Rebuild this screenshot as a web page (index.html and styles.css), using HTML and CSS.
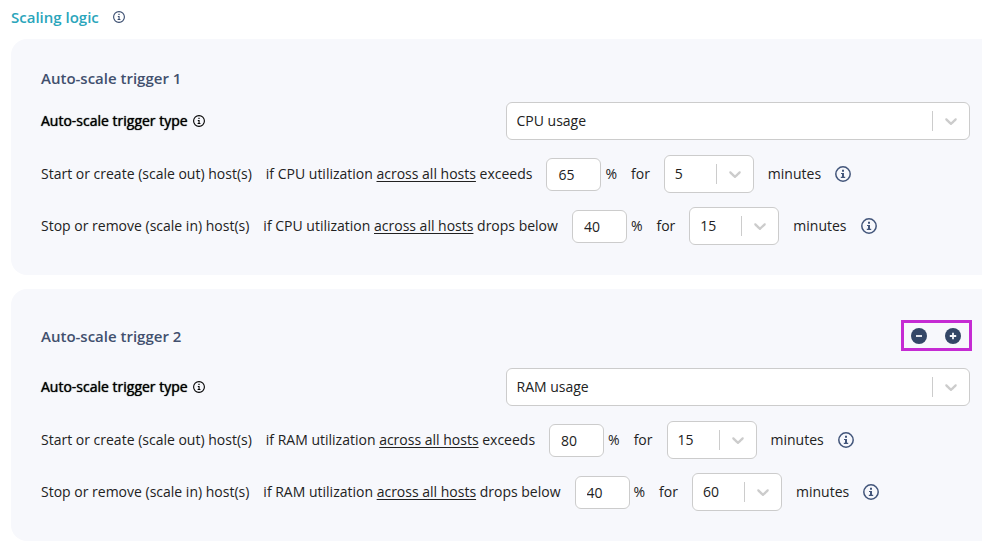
FILE: index.html
```html
<!DOCTYPE html>
<html lang="en">
<head>
<meta charset="utf-8">
<title>Scaling logic</title>
<link rel="stylesheet" href="styles.css">
</head>
<body>
<svg class="defs" aria-hidden="true">
  <symbol id="info" viewBox="0 0 16 16">
    <circle cx="8" cy="8" r="7.2" fill="none" stroke="currentColor" stroke-width="1.5"/>
    <path d="M7 3.800h2v1.900H7zM6 6.900h3v3.900h1.200V12H5.800v-1.200H7V8.100H6z" fill="currentColor"/>
  </symbol>
  <symbol id="info-small" viewBox="0 0 12 12">
    <circle cx="6" cy="6" r="5.400" fill="none" stroke="currentColor" stroke-width="1.100"/>
    <path d="M5.400 2.800h1.200v1.200H5.400zM4.800 5h1.800v3.100h.8V9H4.600v-.9h.9V5.900h-.7z" fill="currentColor"/>
  </symbol>
  <symbol id="chevron" viewBox="0 0 20 20">
    <path d="M4.516 7.548c0.436-0.446 1.043-0.481 1.576 0l3.908 3.747 3.908-3.747c0.533-0.481 1.141-0.446 1.574 0 0.436 0.445 0.408 1.197 0 1.615-0.406 0.418-4.695 4.502-4.695 4.502-0.217 0.223-0.502 0.335-0.787 0.335s-0.570-0.112-0.789-0.335c0 0-4.287-4.084-4.695-4.502s-0.436-1.170 0-1.615z" fill="currentColor"/>
  </symbol>
</svg>
<main class="page">
  <header class="page-head">
    <h1>Scaling logic</h1>
    <svg class="icon-small" role="img" aria-label="Info"><use href="#info-small"/></svg>
  </header>

  <section class="panel">
    <div class="panel-head"><h2>Auto-scale trigger 1</h2></div>
    <div class="field">
      <label for="type1">Auto-scale trigger type <svg class="icon-small" aria-hidden="true"><use href="#info-small"/></svg></label>
      <div class="select"><select id="type1"><option>CPU usage</option><option>RAM usage</option></select><svg class="chevron"><use href="#chevron"/></svg></div>
    </div>
    <div class="rule">
      <span>Start or create (scale out) host(s)</span>
      <label for="out1">if CPU utilization <u>across all hosts</u> exceeds</label>
      <span class="percent"><input id="out1" type="text" value="65">%</span>
      <label for="outmin1">for</label>
      <div class="select short"><select id="outmin1"><option>5</option><option>15</option><option>60</option></select><svg class="chevron"><use href="#chevron"/></svg></div>
      <span>minutes</span>
      <svg class="icon" role="img" aria-label="Info"><use href="#info"/></svg>
    </div>
    <div class="rule">
      <span>Stop or remove (scale in) host(s)</span>
      <label for="in1">if CPU utilization <u>across all hosts</u> drops below</label>
      <span class="percent"><input id="in1" type="text" value="40">%</span>
      <label for="inmin1">for</label>
      <div class="select short"><select id="inmin1"><option>15</option><option>5</option><option>60</option></select><svg class="chevron"><use href="#chevron"/></svg></div>
      <span>minutes</span>
      <svg class="icon" role="img" aria-label="Info"><use href="#info"/></svg>
    </div>
  </section>

  <section class="panel">
    <div class="panel-head with-actions">
      <h2>Auto-scale trigger 2</h2>
      <div class="actions">
        <button type="button" aria-label="Remove trigger"><svg class="icon" viewBox="0 0 16 16"><circle cx="8" cy="8" r="8" fill="currentColor"/><path d="M5 8h6" stroke="#f7f8fc" stroke-width="1.800"/></svg></button>
        <button type="button" aria-label="Add trigger"><svg class="icon" viewBox="0 0 16 16"><circle cx="8" cy="8" r="8" fill="currentColor"/><path d="M4.800 8h6.400M8 4.800v6.400" stroke="#f7f8fc" stroke-width="1.800"/></svg></button>
      </div>
    </div>
    <div class="field">
      <label for="type2">Auto-scale trigger type <svg class="icon-small" aria-hidden="true"><use href="#info-small"/></svg></label>
      <div class="select"><select id="type2"><option>RAM usage</option><option>CPU usage</option></select><svg class="chevron"><use href="#chevron"/></svg></div>
    </div>
    <div class="rule">
      <span>Start or create (scale out) host(s)</span>
      <label for="out2">if RAM utilization <u>across all hosts</u> exceeds</label>
      <span class="percent"><input id="out2" type="text" value="80">%</span>
      <label for="outmin2">for</label>
      <div class="select short"><select id="outmin2"><option>15</option><option>5</option><option>60</option></select><svg class="chevron"><use href="#chevron"/></svg></div>
      <span>minutes</span>
      <svg class="icon" role="img" aria-label="Info"><use href="#info"/></svg>
    </div>
    <div class="rule">
      <span>Stop or remove (scale in) host(s)</span>
      <label for="in2">if RAM utilization <u>across all hosts</u> drops below</label>
      <span class="percent"><input id="in2" type="text" value="40">%</span>
      <label for="inmin2">for</label>
      <div class="select short"><select id="inmin2"><option>60</option><option>5</option><option>15</option></select><svg class="chevron"><use href="#chevron"/></svg></div>
      <span>minutes</span>
      <svg class="icon" role="img" aria-label="Info"><use href="#info"/></svg>
    </div>
  </section>
</main>
</body>
</html>
```
FILE: styles.css
```css
* { box-sizing: border-box; }

body {
  margin: 0;
  background: #fff;
  color: #222;
  font: 14px/20px "Open Sans", sans-serif;
}

.defs { display: none; }

.page {
  display: flex;
  flex-direction: column;
  gap: 14px;
  padding: 7px 0 8px 11px;
}

.page-head {
  display: flex;
  align-items: center;
  gap: 14px;
  margin-bottom: -2px;
  color: #374a6d;
}

h1, h2 {
  margin: 0;
  font-size: 15px;
  font-weight: 600;
  line-height: 20px;
}

h1 { color: #2aa5bb; }
h2 { color: #42506e; }

.icon { width: 16px; height: 16px; display: block; flex: none; color: #42557a; }
.icon-small { width: 12px; height: 12px; flex: none; }

.panel {
  display: flex;
  flex-direction: column;
  gap: 14px;
  padding: 29px 12px 30px 30px;
  border-radius: 16px 0 0 16px;
  background: #f7f8fc;
}

.panel-head {
  display: flex;
  align-items: center;
  justify-content: space-between;
}

.with-actions {
  min-height: 35px;
  margin-bottom: 1px;
}

.actions {
  display: flex;
  align-items: center;
  gap: 18px;
  height: 31px;
  margin-right: -2px;
  padding: 0 8px 0 7px;
  border: 3px solid #c52bd3;
}

.actions button {
  padding: 0;
  border: 0;
  background: none;
  cursor: pointer;
}

.actions .icon { color: #344767; }

.field {
  display: grid;
  grid-template-columns: 1fr 1fr;
  align-items: center;
  margin-bottom: 1px;
}

.field label {
  display: flex;
  align-items: center;
  gap: 5px;
  color: #000;
  text-shadow: 0 0 1px #000;
}

.select { position: relative; }
.short { width: 90px; }

.select select {
  display: block;
  width: 100%;
  height: 38px;
  padding: 0 48px 0 10px;
  border: 1px solid #ccc;
  border-radius: 6px;
  appearance: none;
  background: #fff;
  color: #222;
  font: inherit;
}

.select::after {
  content: "";
  position: absolute;
  top: 9px;
  bottom: 9px;
  right: 37px;
  width: 1px;
  background: #ccc;
}

.chevron {
  position: absolute;
  top: 9px;
  right: 9px;
  width: 20px;
  height: 20px;
  color: #ccc;
  pointer-events: none;
}

.rule {
  display: flex;
  align-items: center;
  gap: 14px;
  white-space: nowrap;
}

u { text-underline-offset: 2px; }

.percent {
  display: flex;
  align-items: center;
  gap: 4px;
}

.percent input {
  width: 55px;
  height: 33px;
  padding: 0 11px;
  border: 1px solid #ccc;
  border-radius: 6px;
  background: #fff;
  color: #222;
  font: inherit;
}
```
